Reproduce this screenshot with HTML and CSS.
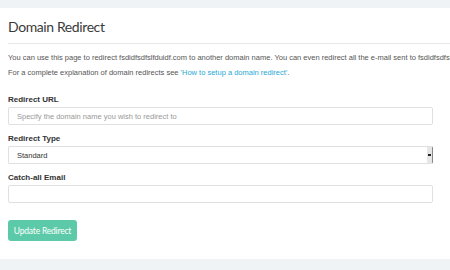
FILE: index.html
```html
<!DOCTYPE html>
<html lang="en">
<head>
  <meta charset="UTF-8" />
  <title>Domain Redirect</title>
  <link rel="stylesheet" href="styles.css">
</head>
<body>
  <main class="panel">
    <h1 class="panel-title">Domain Redirect</h1>

    <div class="intro">
      <p>You can use this page to redirect fsdidfsdfslfduidf.com to another domain name. You can even redirect all the e-mail sent to fsdidfsdfslfduidf.com to another address.</p>
      <p>For a complete explanation of domain redirects see <a href="#">'How to setup a domain redirect'</a>.</p>
    </div>

    <form class="redirect-form">
      <div class="field">
        <label for="redirectUrl">Redirect URL</label>
        <input id="redirectUrl" type="text" placeholder="Specify the domain name you wish to redirect to" />
      </div>

      <div class="field">
        <label for="redirectType">Redirect Type</label>
        <div class="select" id="redirectType">
          <span class="select-value">Standard</span>
          <span class="select-arrow" aria-hidden="true"><span></span></span>
        </div>
      </div>

      <div class="field">
        <label for="catchAll">Catch-all Email</label>
        <input id="catchAll" type="text" />
      </div>

      <button class="update-button" type="button">Update Redirect</button>
    </form>
  </main>
</body>
</html>
```

FILE: styles.css
```css
* {
  box-sizing: border-box;
}

html, body {
  height: 100%;
}

body {
  margin: 0;
  padding: 8px 0 11px;
  background-color: #eff3f6;
  font-family: 'Liberation Sans', Arial, sans-serif;
  color: #555;
  overflow: hidden;
}

.panel {
  background-color: white;
  padding: 0 17px 0 8px;
  height: 100%;
}

.panel-title {
  margin: 0 -17px 0 0;
  padding: 11px 0 8px;
  font-family: Lato, 'Open Sans', sans-serif;
  font-weight: 400;
  font-size: 14px;
  line-height: 16px;
  letter-spacing: -0.4px;
  color: #3a3a3a;
  border-bottom: 1px solid #e8e8e8;
}

.intro {
  margin: 6px -17px 0 0;
  white-space: nowrap;
  overflow: hidden;
}

.intro p {
  margin: 0;
  font-size: 7.5px;
  line-height: 15px;
  color: #555;
}

.intro a {
  color: #27a9d6;
  text-decoration: none;
}

.redirect-form {
  margin-top: 15px;
  display: flex;
  flex-direction: column;
  gap: 9px;
}

.field {
  display: flex;
  flex-direction: column;
  gap: 2px;
}

.field label {
  font-size: 8px;
  line-height: 10px;
  font-weight: 700;
  color: #333;
}

.field input {
  height: 18px;
  width: 100%;
  margin: 0;
  padding: 0 8px;
  border: 1px solid #e0e0e0;
  border-radius: 2px;
  font-family: 'Liberation Sans', Arial, sans-serif;
  font-size: 7.5px;
  color: #333;
  outline: none;
}

.field input::placeholder {
  color: #999;
}

.select {
  height: 18px;
  display: flex;
  align-items: center;
  justify-content: space-between;
  border: 1px solid #e0e0e0;
  border-right: 1px solid #888;
  border-radius: 2px;
  padding-left: 8px;
  font-size: 7.5px;
  color: #333;
}

.select-arrow {
  width: 5px;
  height: 100%;
  background-color: #e6e6e6;
  display: flex;
  align-items: center;
  justify-content: center;
}

.select-arrow span {
  width: 3px;
  height: 2px;
  background-color: #222;
}

.update-button {
  align-self: flex-start;
  margin-top: 8px;
  width: 69px;
  height: 21px;
  padding: 0;
  border: none;
  border-radius: 3px;
  background-color: #5ccaa8;
  color: white;
  font-family: Lato, 'Open Sans', sans-serif;
  font-size: 8.5px;
  letter-spacing: -0.2px;
  cursor: pointer;
}
```
